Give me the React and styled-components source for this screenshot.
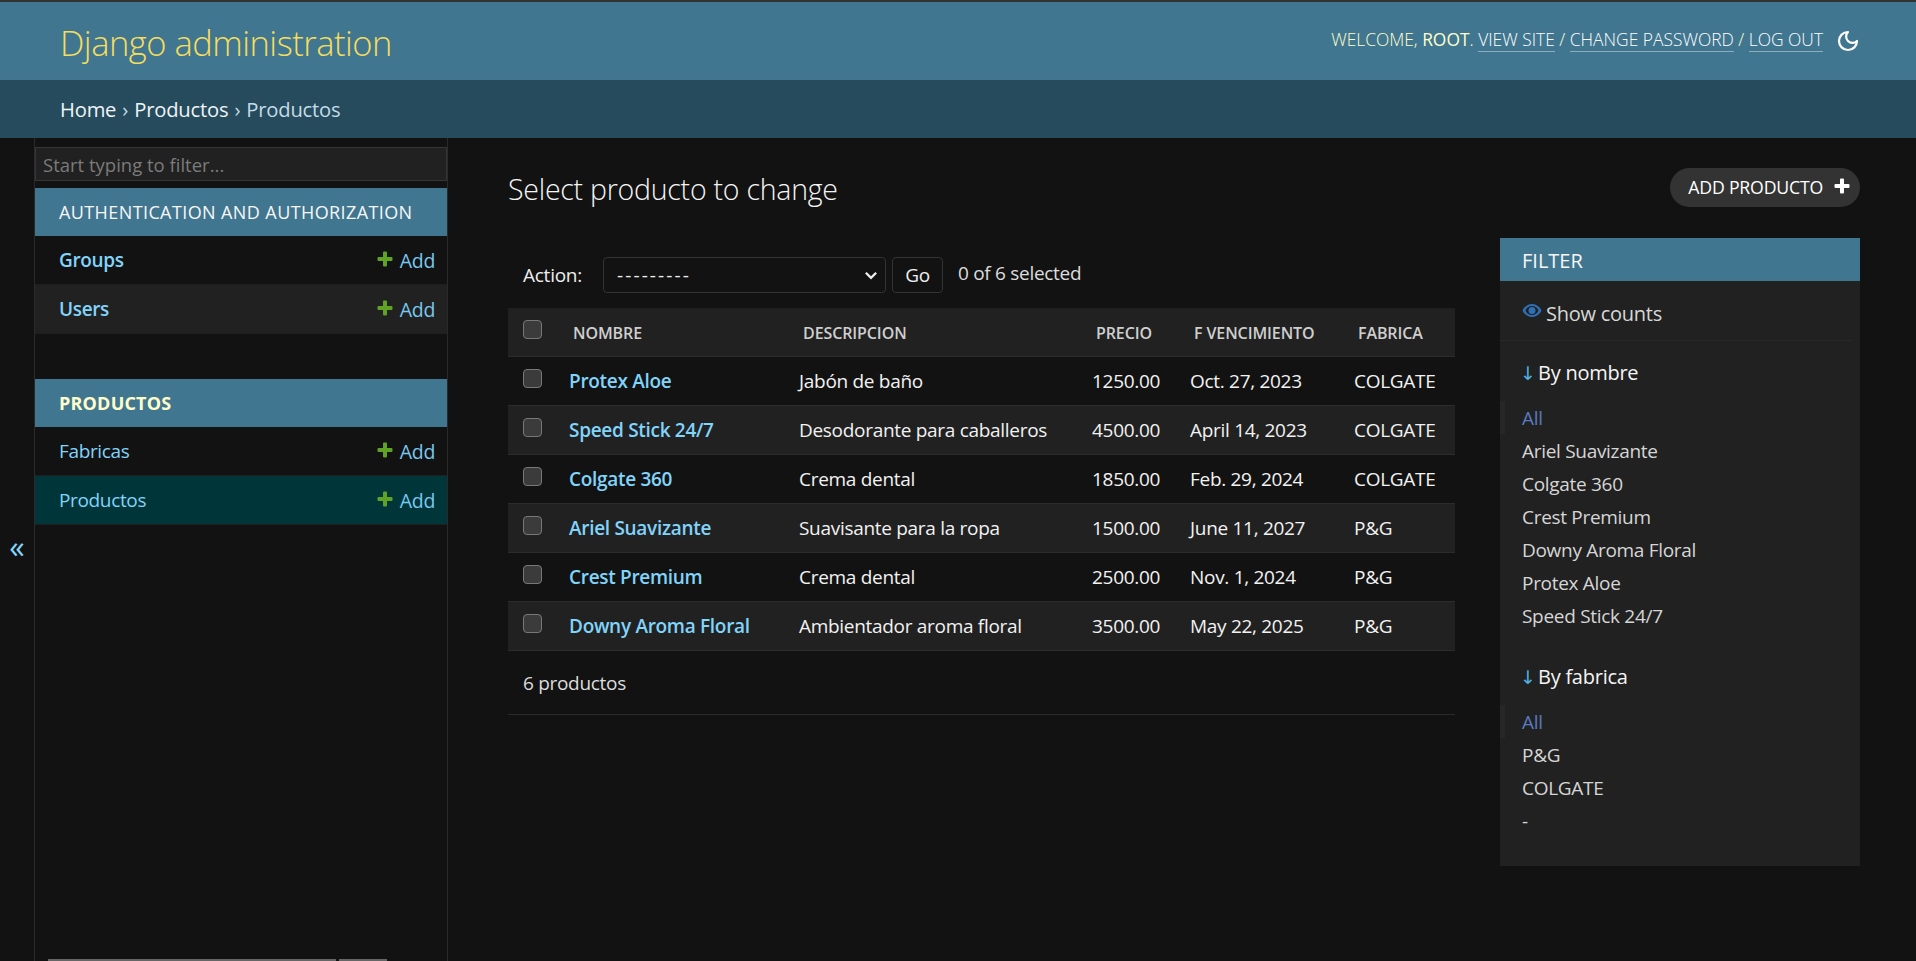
import styled, { createGlobalStyle } from 'styled-components';

const FONT = '"Open Sans", "Noto Sans", sans-serif';

const GlobalStyle = createGlobalStyle`
  html, body {
    margin: 0;
    padding: 0;
    height: 961px;
    overflow: hidden;
    background: #121212;
    color: #eeeeee;
    font-family: ${FONT};
  }
  * { box-sizing: border-box; }
  a { text-decoration: none; }
`;

const Page = styled.div`
  height: 961px;
  display: flex;
  flex-direction: column;
  border-top: 2px solid #333;
`;

const Header = styled.header`
  height: 78px;
  flex: none;
  background: #417690;
  display: flex;
  align-items: center;
  justify-content: space-between;
  padding: 0 56px 0 60px;
`;

const Brand = styled.h1`
  margin: 3px 0 0;
  font-size: 34.5px;
  font-weight: 300;
  letter-spacing: -0.5px;
  color: #f5dd5d;
`;

const UserTools = styled.div`
  display: flex;
  align-items: center;
  margin-bottom: 5px;
  font-size: 17.4px;
  font-weight: 300;
  letter-spacing: 0;
  white-space: pre;
  color: #ffffcc;
  text-transform: uppercase;
`;

const UserLink = styled.a`
  color: #ffffff;
  border-bottom: 1px solid rgba(255, 255, 255, 0.4);
`;

const Moon = styled.svg`
  width: 24px;
  height: 24px;
  margin: 5px 0 0 13px;
  color: #fff;
`;

const Breadcrumbs = styled.nav`
  height: 58px;
  flex: none;
  background: #264b5d;
  display: flex;
  align-items: center;
  padding-left: 60px;
  font-size: 20.2px;
  letter-spacing: -0.2px;
  color: #c4dce8;
  white-space: pre;
`;

const CrumbLink = styled.a`
  color: #eef4f8;
`;

const CrumbSep = styled.span`
  margin: 0 1px;
`;

const Body = styled.div`
  flex: 1;
  display: flex;
  min-height: 0;
`;

const Toggle = styled.div`
  width: 34px;
  flex: none;
  display: flex;
  align-items: center;
  justify-content: center;
  padding-bottom: 6px;
  color: #81d4fa;
  font-size: 31px;
  line-height: 1;
`;

const Sidebar = styled.aside`
  width: 414px;
  flex: none;
  border-left: 1px solid #2a2a2a;
  border-right: 1px solid #2a2a2a;
  padding-top: 9px;
  display: flex;
  flex-direction: column;
`;

const FilterInput = styled.input`
  display: block;
  width: 100%;
  height: 34px;
  margin-bottom: 7px;
  padding: 0 7px;
  background: #212121;
  border: 1px solid #353535;
  color: #eee;
  font-family: ${FONT};
  font-size: 18.5px;
  letter-spacing: 0;
  &::placeholder { color: #7b7b7b; opacity: 1; }
`;

const AppSection = styled.section`
  margin-bottom: ${(props) => props.$gap || 0}px;
`;

const SectionHead = styled.div`
  height: 48px;
  background: #417690;
  display: flex;
  align-items: center;
  padding-left: 24px;
  font-size: 18px;
  letter-spacing: ${(props) => (props.$current ? '0.2px' : '0.4px')};
  font-weight: ${(props) => (props.$current ? 700 : 400)};
  color: ${(props) => (props.$current ? '#ffffcc' : '#f7f7f7')};
`;

const ModelRow = styled.div`
  height: 49px;
  display: flex;
  align-items: center;
  justify-content: space-between;
  padding: 0 12px 0 24px;
  border-bottom: 1px solid #1e1e1e;
  background: ${(props) => props.$bg};
  font-size: 19px;
  letter-spacing: -0.35px;
`;

const ModelLink = styled.a`
  color: #81d4fa;
  font-weight: ${(props) => (props.$bold ? 600 : 500)};
`;

const AddLink = styled.a`
  display: flex;
  align-items: center;
  gap: 7px;
  font-size: 19.5px;
  color: #79c8ee;
`;

const PlusIcon = styled.svg`
  width: ${(props) => props.$size}px;
  height: ${(props) => props.$size}px;
  margin-top: -3px;
  color: ${(props) => props.$color};
`;

const Rail = styled.div`
  margin: auto 0 0 13px;
  display: flex;
  gap: 3px;
  flex: none;
`;

const RailBar = styled.div`
  height: 2px;
  width: ${(props) => props.$w}px;
  background: #666;
`;

const Main = styled.main`
  flex: 1;
  min-width: 0;
  padding: 0 56px 0 60px;
`;

const TitleRow = styled.div`
  height: 100px;
  display: flex;
  align-items: center;
  justify-content: space-between;
`;

const Title = styled.h1`
  margin: 1px 0 0;
  font-size: 28.5px;
  font-weight: 300;
  letter-spacing: -0.25px;
  color: #f5f5f5;
`;

const AddButton = styled.a`
  height: 39px;
  margin-top: -2px;
  display: flex;
  align-items: center;
  gap: 11px;
  padding: 0 10px 0 18px;
  border-radius: 20px;
  background: #333333;
  color: #fff;
  font-size: 17.7px;
  letter-spacing: -0.2px;
`;

const Columns = styled.div`
  display: flex;
  justify-content: space-between;
  align-items: flex-start;
`;

const ChangeList = styled.div`
  width: 947px;
  padding-top: 19px;
`;

const Actions = styled.div`
  height: 36px;
  margin-bottom: 15px;
  padding-left: 15px;
  display: flex;
  align-items: center;
  font-size: 19px;
  letter-spacing: -0.25px;
  color: #eeeeee;
`;

const ActionLabel = styled.span`
  width: 80px;
`;

const ActionSelect = styled.div`
  width: 283px;
  height: 36px;
  display: flex;
  align-items: center;
  justify-content: space-between;
  padding: 0 6px 0 13px;
  border: 1px solid #333;
  border-radius: 4px;
  background: #121212;
  letter-spacing: 2.1px;
`;

const GoButton = styled.div`
  width: 51px;
  height: 36px;
  margin: 0 15px 0 6px;
  display: flex;
  align-items: center;
  justify-content: center;
  border: 1px solid #333;
  border-radius: 4px;
`;

const Counter = styled.span`
  margin-top: -5px;
  font-size: 19px;
  letter-spacing: -0.3px;
  color: #dddddd;
`;

const Table = styled.table`
  width: 100%;
  table-layout: fixed;
  border-collapse: collapse;
  font-size: 19px;
  letter-spacing: -0.3px;
`;

const HeadCell = styled.th`
  height: 48px;
  padding: 1px 0 0 16px;
  text-align: left;
  background: #212121;
  border-top: 1px solid #1e1e1e;
  border-bottom: 1px solid #2c2c2c;
  font-size: 16px;
  font-weight: 600;
  letter-spacing: -0.1px;
  color: #cfcfcf;
`;

const CheckCell = styled.td`
  padding: 0 0 0 15px;
`;

const CheckHead = styled(HeadCell)`
  padding: 0 0 2px 15px;
`;

const Row = styled.tr`
  height: 49px;
  background: ${(props) => (props.$odd ? '#212121' : '#121212')};
  border-bottom: 1px solid #2c2c2c;
`;

const Cell = styled.td`
  padding: 0 0 0 12px;
  color: #f2f2f2;
  white-space: nowrap;
`;

const RowLink = styled.a`
  color: #81d4fa;
  font-weight: 600;
`;

const Check = styled.span`
  display: block;
  width: 19px;
  height: 19px;
  margin-top: -5px;
  border: 1px solid #787878;
  border-radius: 4px;
  background: #3b3b3b;
`;

const Paginator = styled.div`
  height: 64px;
  padding-left: 15px;
  display: flex;
  align-items: center;
  font-size: 19px;
  letter-spacing: -0.3px;
  color: #dddddd;
  border-bottom: 1px solid #2a2a2a;
`;

const FilterPanel = styled.div`
  width: 360px;
  height: 628px;
  flex: none;
  background: #212121;
`;

const FilterHead = styled.div`
  height: 43px;
  padding: 2px 0 0 22px;
  display: flex;
  align-items: center;
  background: #417690;
  color: #f7f7f7;
  font-size: 20px;
  letter-spacing: 0;
`;

const ShowCounts = styled.div`
  height: 60px;
  margin: 0 8px 0 0;
  padding: 6px 0 0 22px;
  display: flex;
  align-items: center;
  gap: 4px;
  border-bottom: 1px solid #282828;
  font-size: 20px;
  letter-spacing: -0.25px;
  color: #d8d8d8;
`;

const EyeIcon = styled.svg`
  width: 20px;
  height: 15px;
  margin-top: -7px;
`;

const FilterGroup = styled.div`
  padding-top: ${(props) => props.$top}px;
`;

const FilterTitle = styled.h3`
  margin: 0 0 13px 22px;
  font-size: 20px;
  font-weight: 400;
  letter-spacing: -0.25px;
  line-height: 30px;
  color: #f5f5f5;
`;

const Arrow = styled.span`
  display: inline-block;
  width: 18px;
  margin-left: -2px;
  font-family: "DejaVu Sans", sans-serif;
  font-size: 19px;
  color: #4fb0e0;
`;

const FilterItem = styled.div`
  height: 33px;
  padding-left: 22px;
  display: flex;
  align-items: center;
  font-size: 19px;
  letter-spacing: -0.3px;
  color: ${(props) => (props.$selected ? '#5a7abf' : '#d6d6d6')};
  border-left: ${(props) => (props.$selected ? '5px solid #272727' : 'none')};
  ${(props) => (props.$selected ? 'padding-left: 17px;' : '')}
`;

const Plus = ({ size, color }) => (
  <PlusIcon $size={size} $color={color} viewBox="0 0 16 16">
    <path fill="currentColor" d="M6 1.5a1 1 0 0 1 1-1h2a1 1 0 0 1 1 1V6h4.5a1 1 0 0 1 1 1v2a1 1 0 0 1-1 1H10v4.5a1 1 0 0 1-1 1H7a1 1 0 0 1-1-1V10H1.500a1 1 0 0 1-1-1V7a1 1 0 0 1 1-1H6z" />
  </PlusIcon>
);

const rows = [
  ['Protex Aloe', 'Jabón de baño', '1250.00', 'Oct. 27, 2023', 'COLGATE'],
  ['Speed Stick 24/7', 'Desodorante para caballeros', '4500.00', 'April 14, 2023', 'COLGATE'],
  ['Colgate 360', 'Crema dental', '1850.00', 'Feb. 29, 2024', 'COLGATE'],
  ['Ariel Suavizante', 'Suavisante para la ropa', '1500.00', 'June 11, 2027', 'P&G'],
  ['Crest Premium', 'Crema dental', '2500.00', 'Nov. 1, 2024', 'P&G'],
  ['Downy Aroma Floral', 'Ambientador aroma floral', '3500.00', 'May 22, 2025', 'P&G'],
];

const byNombre = ['Ariel Suavizante', 'Colgate 360', 'Crest Premium', 'Downy Aroma Floral', 'Protex Aloe', 'Speed Stick 24/7'];
const byFabrica = ['P&G', 'COLGATE', '-'];

export default function App() {
  return (
    <>
      <GlobalStyle />
      <Page>
        <Header>
          <Brand>Django administration</Brand>
          <UserTools>
            <span>Welcome, <b>root</b>. </span>
            <span><UserLink>View site</UserLink> / <UserLink>Change password</UserLink> / <UserLink>Log out</UserLink></span>
            <Moon viewBox="0 0 24 24" fill="none" stroke="currentColor" strokeWidth="2.2" strokeLinecap="round" strokeLinejoin="round">
              <path d="M12 3a6 6 0 0 0 9 9 9 9 0 1 1-9-9z" />
            </Moon>
          </UserTools>
        </Header>
        <Breadcrumbs>
          <span><CrumbLink>Home</CrumbLink> <CrumbSep>›</CrumbSep> <CrumbLink>Productos</CrumbLink> <CrumbSep>›</CrumbSep> Productos</span>
        </Breadcrumbs>
        <Body>
          <Toggle>«</Toggle>
          <Sidebar>
            <FilterInput placeholder="Start typing to filter..." />
            <AppSection $gap={45}>
              <SectionHead>AUTHENTICATION AND AUTHORIZATION</SectionHead>
              <ModelRow $bg="#121212">
                <ModelLink $bold>Groups</ModelLink>
                <AddLink><Plus size={16} color="#5fa225" />Add</AddLink>
              </ModelRow>
              <ModelRow $bg="#212121">
                <ModelLink $bold>Users</ModelLink>
                <AddLink><Plus size={16} color="#5fa225" />Add</AddLink>
              </ModelRow>
            </AppSection>
            <AppSection>
              <SectionHead $current>PRODUCTOS</SectionHead>
              <ModelRow $bg="#121212">
                <ModelLink>Fabricas</ModelLink>
                <AddLink><Plus size={16} color="#5fa225" />Add</AddLink>
              </ModelRow>
              <ModelRow $bg="#00363a">
                <ModelLink>Productos</ModelLink>
                <AddLink><Plus size={16} color="#5fa225" />Add</AddLink>
              </ModelRow>
            </AppSection>
            <Rail>
              <RailBar $w={288} />
              <RailBar $w={48} />
            </Rail>
          </Sidebar>
          <Main>
            <TitleRow>
              <Title>Select producto to change</Title>
              <AddButton>ADD PRODUCTO <Plus size={16} color="#ffffff" /></AddButton>
            </TitleRow>
            <Columns>
              <ChangeList>
                <Actions>
                  <ActionLabel>Action:</ActionLabel>
                  <ActionSelect>
                    ---------
                    <svg width="16" height="16" viewBox="0 0 14 14" fill="none" stroke="#eee" strokeWidth="2">
                      <path d="M2.500 5l4.500 4.500L11.500 5" />
                    </svg>
                  </ActionSelect>
                  <GoButton>Go</GoButton>
                  <Counter>0 of 6 selected</Counter>
                </Actions>
                <Table>
                  <colgroup>
                    <col width="49" />
                    <col width="230" />
                    <col width="293" />
                    <col width="98" />
                    <col width="164" />
                    <col width="113" />
                  </colgroup>
                  <thead>
                    <tr>
                      <CheckHead><Check /></CheckHead>
                      <HeadCell>NOMBRE</HeadCell>
                      <HeadCell>DESCRIPCION</HeadCell>
                      <HeadCell>PRECIO</HeadCell>
                      <HeadCell>F VENCIMIENTO</HeadCell>
                      <HeadCell>FABRICA</HeadCell>
                    </tr>
                  </thead>
                  <tbody>
                    {rows.map((row, index) => (
                      <Row key={row[0]} $odd={index % 2 === 1}>
                        <CheckCell><Check /></CheckCell>
                        <Cell><RowLink>{row[0]}</RowLink></Cell>
                        <Cell>{row[1]}</Cell>
                        <Cell>{row[2]}</Cell>
                        <Cell>{row[3]}</Cell>
                        <Cell>{row[4]}</Cell>
                      </Row>
                    ))}
                  </tbody>
                </Table>
                <Paginator>6 productos</Paginator>
              </ChangeList>
              <FilterPanel>
                <FilterHead>FILTER</FilterHead>
                <ShowCounts>
                  <EyeIcon viewBox="0 0 20 15">
                    <path fill="#2f6fb5" d="M10 1C5.500 1 2 4 0.500 7.500 2 11 5.500 14 10 14s8-3 9.500-6.500C18 4 14.500 1 10 1zm0 11a7 7 0 0 1-6.500-4.500A7 7 0 0 1 10 3a7 7 0 0 1 6.500 4.500A7 7 0 0 1 10 12z" />
                    <circle cx="10" cy="7.500" r="3.500" fill="#2f6fb5" />
                  </EyeIcon>
                  Show counts
                </ShowCounts>
                <FilterGroup $top={17}>
                  <FilterTitle><Arrow>↓</Arrow>By nombre</FilterTitle>
                  <FilterItem $selected>All</FilterItem>
                  {byNombre.map((item) => <FilterItem key={item}>{item}</FilterItem>)}
                </FilterGroup>
                <FilterGroup $top={30}>
                  <FilterTitle><Arrow>↓</Arrow>By fabrica</FilterTitle>
                  <FilterItem $selected>All</FilterItem>
                  {byFabrica.map((item) => <FilterItem key={item}>{item}</FilterItem>)}
                </FilterGroup>
              </FilterPanel>
            </Columns>
          </Main>
        </Body>
      </Page>
    </>
  );
}
